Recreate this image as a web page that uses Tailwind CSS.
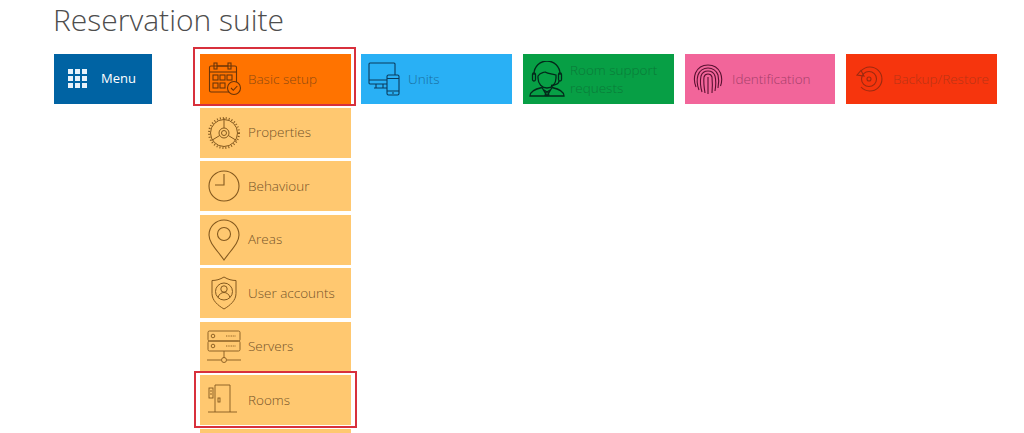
<!DOCTYPE html>
<html><head><meta charset="utf-8">
<script src="https://cdn.jsdelivr.net/npm/@tailwindcss/browser@4"></script>
</head>
<body class="bg-white font-['Open_Sans',sans-serif] overflow-hidden">
<div class="relative h-[433px] w-[1024px] overflow-hidden pl-[53px]">
  <h1 class="h-[54px] text-[30px] leading-[40px] font-light text-[#4d4d4d]">Reservation suite</h1>
  <div class="flex items-start">
    <div class="ml-[1px] flex h-[50px] w-[98px] shrink-0 items-center bg-[#0063a3] pl-[14px] text-white">
      <svg class="h-[20px] w-[20px]" viewBox="0 0 20 20" fill="#e8f2fa"><rect x="0" y="0" width="5" height="5"/><rect x="7" y="0" width="5" height="5"/><rect x="14" y="0" width="5" height="5"/><rect x="0" y="7" width="5" height="5"/><rect x="7" y="7" width="5" height="5"/><rect x="14" y="7" width="5" height="5"/><rect x="0" y="14" width="5" height="5"/><rect x="7" y="14" width="5" height="5"/><rect x="14" y="14" width="5" height="5"/></svg>
      <span class="ml-[13px] text-[13px]">Menu</span>
    </div>
    <div class="ml-[48px] flex w-[151px] shrink-0 flex-col gap-[3.500px]">
      <div class="flex h-[50px] items-center bg-[#ff7300] pl-[8px] text-[13.500px] font-light text-[#8f4a10]">
        <svg class="h-[34px] w-[34px] shrink-0" viewBox="0 0 34 34" fill="none" stroke="#6b3508" stroke-width="1.100"><rect x="1.500" y="4" width="27" height="26" rx="1.500"/><path d="M1.500 10h27"/><rect x="6" y="1" width="3" height="6"/><rect x="20" y="1" width="3" height="6"/><path d="M9 4h11"/><rect x="5" y="13" width="5" height="5"/><rect x="12" y="13" width="5" height="5"/><rect x="19" y="13" width="5" height="5"/><rect x="5" y="21" width="5" height="5"/><rect x="12" y="21" width="5" height="5"/><circle cx="26" cy="26" r="6.500" fill="#ff7300"/><path d="M23 26l2.300 2.300 4-4.300"/></svg>
        <span class="ml-[6px]">Basic setup</span>
      </div>
      <div class="flex h-[50px] items-center bg-[#ffc870] pl-[7px] text-[13.500px] font-light text-[#76552a]">
        <svg class="h-[34px] w-[34px] shrink-0" viewBox="0 0 34 34" fill="none" stroke="#84591f" stroke-width="1"><circle cx="17" cy="17" r="13.500"/><circle cx="17" cy="17" r="15" stroke-width="2" stroke-dasharray="1 2"/><circle cx="17" cy="17" r="5"/><circle cx="17" cy="17" r="2.500"/><path d="M17 12V2M12.700 19.500 4.500 24.500M21.300 19.500l8.200 5"/></svg>
        <span class="ml-[7px]">Properties</span>
      </div>
      <div class="flex h-[50px] items-center bg-[#ffc870] pl-[7px] text-[13.500px] font-light text-[#76552a]">
        <svg class="h-[34px] w-[34px] shrink-0" viewBox="0 0 34 34" fill="none" stroke="#84591f" stroke-width="1.100"><circle cx="17" cy="17" r="15"/><path d="M17 5v11H8"/></svg>
        <span class="ml-[7px]">Behaviour</span>
      </div>
      <div class="flex h-[50px] items-center bg-[#ffc870] pl-[7px] text-[13.500px] font-light text-[#76552a]">
        <svg class="h-[42px] w-[34px] shrink-0" viewBox="0 0 34 42" fill="none" stroke="#84591f" stroke-width="1.100"><path d="M17 41C10 31 2 24 2 16a15 15 0 0 1 30 0c0 8-8 15-15 25z"/><circle cx="17" cy="15" r="6.500"/></svg>
        <span class="ml-[7px]">Areas</span>
      </div>
      <div class="flex h-[50px] items-center bg-[#ffc870] pl-[7px] text-[13.500px] font-light text-[#76552a]">
        <svg class="h-[34px] w-[34px] shrink-0" viewBox="0 0 34 34" fill="none" stroke="#84591f" stroke-width="1"><path d="M17 1c4 2.500 8 3.500 12 3.500v13c0 7-6 12-12 15.500C11 29.500 5 24.500 5 17.500v-13C9 4.500 13 3.500 17 1z"/><circle cx="17" cy="15.500" r="8.500"/><circle cx="17" cy="13" r="3.200"/><path d="M11 21.500c1-3.500 3.500-5 6-5s5 1.500 6 5"/></svg>
        <span class="ml-[7px]">User accounts</span>
      </div>
      <div class="flex h-[50px] items-center bg-[#ffc870] pl-[7px] text-[13.500px] font-light text-[#76552a]">
        <svg class="h-[34px] w-[34px] shrink-0" viewBox="0 0 34 34" fill="none" stroke="#84591f" stroke-width="0.900"><rect x="1" y="1" width="32" height="10" rx="1.500"/><rect x="1" y="11" width="32" height="10" rx="1.500"/><circle cx="6" cy="6" r="1.800"/><circle cx="6" cy="16" r="1.800"/><path d="M19 6h10M19 16h10" stroke-dasharray="1 0.700"/><path d="M17 21v7M0 30h14M20 30h14"/><circle cx="17" cy="30" r="2.500"/></svg>
        <span class="ml-[7px]">Servers</span>
      </div>
      <div class="flex h-[50px] items-center bg-[#ffc870] pl-[7px] text-[13.500px] font-light text-[#76552a]">
        <svg class="h-[34px] w-[34px] shrink-0" viewBox="0 0 34 34" fill="none" stroke="#84591f" stroke-width="0.900"><path d="M1 29h29M8 29V2h15v27"/><rect x="2" y="5" width="4" height="10"/><path d="M3 8h2M3 11h2"/><rect x="11" y="15" width="2" height="4"/></svg>
        <span class="ml-[7px]">Rooms</span>
      </div>
      <div class="h-[50px] bg-[#ffc870]"></div>
    </div>
    <div class="ml-[10px] flex h-[50px] w-[151px] shrink-0 items-center bg-[#29b0f5] pl-[7px] text-[13.500px] font-light text-[#1a6f9e]">
      <svg class="h-[34px] w-[33px] shrink-0" viewBox="0 0 33 34" fill="none" stroke="#0b3b5c" stroke-width="1.100"><path d="M19 22H2a1 1 0 0 1-1-1V2a1 1 0 0 1 1-1h24a1 1 0 0 1 1 1v11"/><path d="M1 18h18M8 22v4M15 22v4M6 26h13"/><rect x="19" y="13" width="12" height="20" rx="1.500"/><path d="M19 16.500h12M19 29h12M24 31h2"/></svg>
      <span class="ml-[7px]">Units</span>
    </div>
    <div class="ml-[11px] flex h-[50px] w-[151px] shrink-0 items-center bg-[#079f45] pl-[6px] text-[13.500px] leading-[18px] font-light text-[#0a7a38]">
      <svg class="h-[36px] w-[36px] shrink-0" viewBox="0 0 36 36" fill="none" stroke="#03291a" stroke-width="1.300"><path d="M5 14v-1a13 13 0 0 1 26 0v1"/><rect x="3.500" y="12" width="3" height="8" rx="1.500"/><rect x="29.500" y="12" width="3" height="8" rx="1.500"/><path d="M9 15c2-3 4-3 7-4 3 2 8 2 11 3v3c0 6-4 10-9 10s-9-4-9-10z"/><path d="M30 20c0 3-3 4-8 4.500"/><path d="M1 35c0-5 5-7 12-8.500l5 8.500 5-8.500c7 1.500 12 3.500 12 8.500z"/><path d="M15 29l3 2 3-2M17 31l-1 4M19 31l1 4"/></svg>
      <span class="ml-[5px]">Room support requests</span>
    </div>
    <div class="ml-[11px] flex h-[50px] w-[150px] shrink-0 items-center bg-[#f2659a] pl-[8px] text-[13.500px] font-light text-[#a5406a]">
      <svg class="h-[30px] w-[30px] shrink-0" viewBox="0 0 30 30" fill="none" stroke="#5a1030" stroke-width="1.100"><path d="M3 23C1 18 1 13 2.500 9 5 3.500 10 1 15 1s10 2.500 12.500 8c1.500 4 1.500 9 0 13"/><path d="M6 26c-2-5-2.500-10-1-15 1.500-4 5.500-7 10-7s8.500 3 10 7c1 4 1 8 0 13"/><path d="M9 28c-1.500-5-2-11-1-16 1-3 4-5 7-5s6 2 7 5c1 4 1 9 0 15"/><path d="M12 29c-1-6-1.500-12-1-16 .5-2 2-3 4-3s3.500 1 4 3c.5 5 .5 10 0 16"/><path d="M15 13v17"/></svg>
      <span class="ml-[9px]">Identification</span>
    </div>
    <div class="ml-[11px] flex h-[50px] w-[151px] shrink-0 items-center bg-[#f6350d] pl-[10px] text-[13.500px] font-light text-[#b93415]">
      <svg class="h-[26px] w-[27px] shrink-0" viewBox="0 0 27 26" fill="none" stroke="#9c2a10" stroke-width="1.100"><path d="M5 5A12 12 0 1 1 5 21"/><path d="M1 9l4-4.500L8 10z"/><circle cx="13" cy="13" r="7.500"/><circle cx="13" cy="13" r="2"/></svg>
      <span class="ml-[10px] whitespace-nowrap">Backup/Restore</span>
    </div>
  </div>
  <div class="absolute left-[193px] top-[47px] h-[59px] w-[163px] border-2 border-[#d8303c]"></div>
  <div class="absolute left-[194px] top-[371px] h-[57px] w-[163px] border-2 border-[#d8303c]"></div>
</div>
</body></html>
